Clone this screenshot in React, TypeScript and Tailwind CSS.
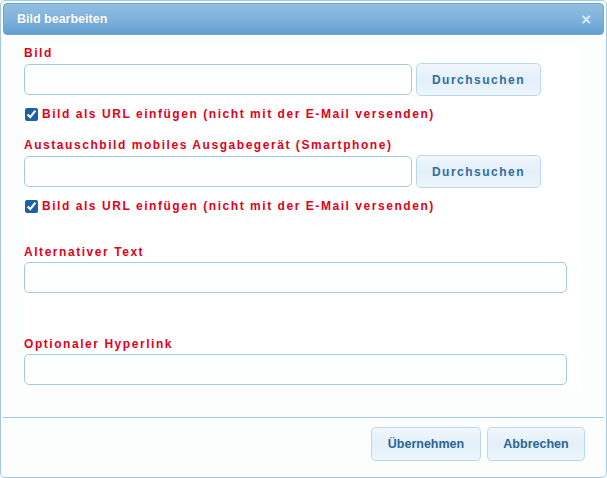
import { useState } from "react";

const LABEL =
  "block font-['Liberation_Sans',Arial,sans-serif] text-[12px] font-bold leading-[13px] tracking-[1.55px] text-[#e2001a]";
const INPUT =
  "h-[31px] rounded-[5px] border border-[#a6c9e2] bg-[#fdfefe] px-2 text-[12px] outline-none";
const BROWSE =
  "h-[33px] w-[125px] rounded-[5px] border border-[#bcd7ec] bg-gradient-to-b from-[#f1f7fd] via-[#e3eff9] to-[#eef6fd] font-['Liberation_Sans',Arial,sans-serif] text-[12px] font-bold tracking-[1.5px] text-[#2e6e9e]";
const FOOT_BTN =
  "h-[34px] rounded-[5px] border border-[#bcd7ec] bg-gradient-to-b from-[#f1f7fd] via-[#e3eff9] to-[#eef6fd] font-['Liberation_Sans',Arial,sans-serif] text-[12.5px] font-bold text-[#2b6595]";

const UrlCheck = ({ className }: { className: string }) => {
  const [on, setOn] = useState(true);
  return (
    <label className={`flex items-center ${className}`}>
      <input
        type="checkbox"
        checked={on}
        onChange={() => setOn(!on)}
        className="ml-[1px] mr-[4px] h-[13px] w-[13px] accent-[#1f5fa8]"
      />
      <span className={LABEL}>Bild als URL einfügen (nicht mit der E-Mail versenden)</span>
    </label>
  );
};

export default function App() {
  return (
    <div className="flex h-[478px] w-[607px] flex-col rounded-[5px] border border-[#a6c9e2] bg-[#fcfdfd] p-[2px]">
      {/* title bar */}
      <div className="flex h-[32px] items-center justify-between rounded-[4px] border border-[#6aa6d6] bg-gradient-to-b from-[#92bfe2] via-[#7fb2dc] to-[#629fd2] pl-[13px] pr-[11px]">
        <span className="font-['Liberation_Sans',Arial,sans-serif] text-[12.5px] font-bold text-white [text-shadow:0_0_1px_rgba(0,0,0,0.15)]">
          Bild bearbeiten
        </span>
        <span className="font-['DejaVu_Sans',sans-serif] text-[14px] font-bold leading-none text-[#e4eef7]">×</span>
      </div>

      {/* form panel */}
      <div className="ml-[21px] mt-[10px] flex h-[349px] w-[558px] flex-col bg-white">
        <span className={`${LABEL} mt-[2px]`}>Bild</span>
        <div className="mt-[3px] flex items-center gap-[4px]">
          <input className={`${INPUT} w-[388px]`} />
          <button className={BROWSE}>Durchsuchen</button>
        </div>
        <UrlCheck className="mt-[12px]" />

        <span className={`${LABEL} mt-[18px]`}>Austauschbild mobiles Ausgabegerät (Smartphone)</span>
        <div className="mt-[3px] flex items-center gap-[4px]">
          <input className={`${INPUT} w-[388px]`} />
          <button className={BROWSE}>Durchsuchen</button>
        </div>
        <UrlCheck className="mt-[12px]" />

        <span className={`${LABEL} mt-[33px]`}>Alternativer Text</span>
        <input className={`${INPUT} mt-[3px] h-[30px] w-[543px]`} />

        <span className={`${LABEL} mt-[45px]`}>Optionaler Hyperlink</span>
        <input className={`${INPUT} mt-[3px] h-[30px] w-[543px]`} />
      </div>

      {/* footer */}
      <div className="mt-[23px] border-t border-[#a6c9e2]" />
      <div className="mt-[9px] flex justify-end gap-[6px] pr-[19px]">
        <button className={`${FOOT_BTN} w-[110px]`}>Übernehmen</button>
        <button className={`${FOOT_BTN} w-[98px]`}>Abbrechen</button>
      </div>
    </div>
  );
}
